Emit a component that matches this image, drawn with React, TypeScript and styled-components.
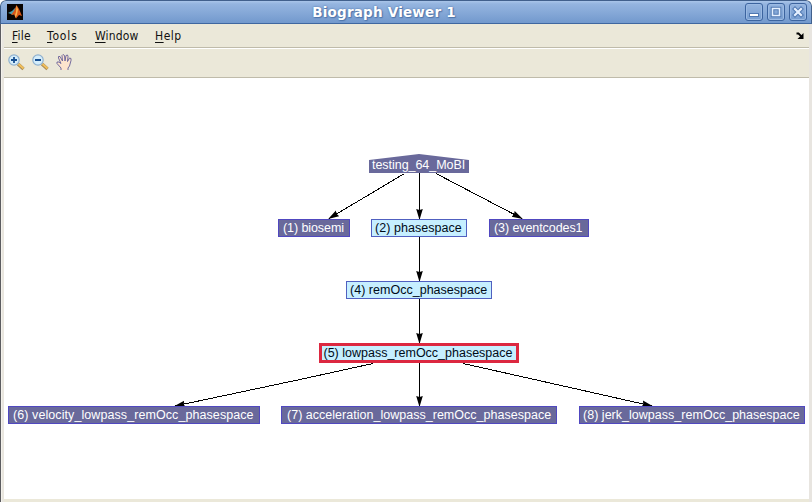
import React from 'react';
import styled, { createGlobalStyle } from 'styled-components';

const GlobalStyle = createGlobalStyle`
  * { box-sizing: border-box; }
  html, body { margin: 0; background: #fff; overflow: hidden; }
`;

const WindowFrame = styled.div`
  width: 812px;
  height: 502px;
  display: flex;
  flex-direction: column;
  background: #ebe8d9;
  border-radius: 6px 6px 0 0;
  overflow: hidden;
  font-family: 'DejaVu Sans', sans-serif;
`;

const TitleBar = styled.header`
  height: 24px;
  flex: none;
  display: grid;
  grid-template-columns: 36px 1fr 80px;
  align-items: center;
  border: 1px solid #41608c;
  border-bottom-color: #3f67a0;
  border-radius: 6px 6px 0 0;
  background: linear-gradient(#a9c5e9 0, #94b4df 3px, #85a8d7 12px, #7299cd 22px);
`;

const Title = styled.h1`
  margin: 0;
  text-align: center;
  font: bold 13.5px/22px 'DejaVu Sans', sans-serif;
  letter-spacing: 0.22px;
  color: #fff;
  text-shadow: 0 0 2px #44699f, 1px 1px 1px #5379ae;
`;

const AppIcon = styled.svg`
  width: 16px;
  height: 16px;
  margin-left: 6px;
`;

const WindowButtons = styled.div`
  display: flex;
  justify-content: flex-end;
  gap: 4px;
  padding-right: 4px;
`;

const WindowButton = styled.button`
  width: 18px;
  height: 18px;
  padding: 0;
  border: 1px solid #3c649f;
  border-radius: 3px;
  background: linear-gradient(#94b4df, #779dd0);
  box-shadow: inset 0 0 0 1px #9bbae3;
  svg { display: block; width: 16px; height: 16px; }
`;

const Body = styled.div`
  flex: 1;
  min-height: 0;
  display: flex;
  flex-direction: column;
  padding: 0 3px 3px 4px;
  background: linear-gradient(90deg, #5c5c60 0 1px, #f4f2ec 1px 2px, #e9e6df 2px 4px, #ebe8d9 4px 809px, #e8e5e0 809px);
`;

const MenuBar = styled.nav`
  height: 24px;
  flex: none;
  display: flex;
  align-items: center;
  border-bottom: 1px solid #bfbbaa;
  padding: 0 5px 0 8px;
`;

const MenuItem = styled.span<{ $width: number; $spacing: number }>`
  width: ${(p) => p.$width}px;
  font: 12px/22px 'DejaVu Sans Condensed', 'DejaVu Sans', sans-serif;
  font-stretch: condensed;
  letter-spacing: ${(p) => p.$spacing}px;
  white-space: nowrap;
  color: #111;
`;

const Mnemonic = styled.span`
  text-decoration: underline;
  text-decoration-thickness: 1px;
  text-underline-offset: 2px;
`;

const DockArrow = styled.svg`
  width: 8px;
  height: 8px;
  margin-left: auto;
`;

const ToolBar = styled.div`
  height: 30px;
  flex: none;
  display: flex;
  align-items: center;
  gap: 7px;
  padding: 0 0 2px 4px;
  border-top: 1px solid #fff;
  border-bottom: 1px solid #bfbbaa;
  svg { width: 17px; height: 17px; }
`;

const Canvas = styled.main`
  position: relative;
  flex: 1;
  min-height: 0;
  background: #fff;
`;

const Edges = styled.svg`
  position: absolute;
  inset: 0;
  width: 100%;
  height: 100%;
`;

type Kind = 'dark' | 'light' | 'selected' | 'root';

const fills: Record<Kind, string> = { dark: '#69699b', light: '#c6efff', selected: '#c6efff', root: '#69699b' };
const borders: Record<Kind, string> = {
  dark: '1px solid #5048c0',
  light: '1px solid #5060c0',
  selected: '3px solid #dc2840',
  root: '0 solid transparent',
};

const GraphNode = styled.div<{ $x: number; $y: number; $w: number; $h: number; $kind: Kind; $spacing: number; $pad: number }>`
  position: absolute;
  left: ${(p) => p.$x - 4}px;
  top: ${(p) => p.$y - 78}px;
  width: ${(p) => p.$w}px;
  height: ${(p) => p.$h}px;
  display: flex;
  align-items: center;
  background: ${(p) => fills[p.$kind]};
  border: ${(p) => borders[p.$kind]};
  clip-path: ${(p) => (p.$kind === 'root' ? 'polygon(0 6px, 50% 0, 100% 6px, 100% 100%, 0 100%)' : 'none')};
  padding: ${(p) => (p.$kind === 'root' ? 2 : 0)}px 0 0 ${(p) => p.$pad}px;
  color: ${(p) => (p.$kind === 'dark' || p.$kind === 'root' ? '#fff' : '#000b18')};
  font: 12.5px/14px 'Liberation Sans', Arial, sans-serif;
  letter-spacing: ${(p) => p.$spacing}px;
  white-space: nowrap;
`;

const nodes: { label: string; x: number; y: number; w: number; h: number; kind: Kind; spacing: number; pad: number }[] = [
  { label: 'testing_64_MoBI', x: 369, y: 154, w: 100, h: 19, kind: 'root', spacing: -0.04, pad: 3 },
  { label: '(1) biosemi', x: 278, y: 219, w: 72, h: 18, kind: 'dark', spacing: -0.08, pad: 4 },
  { label: '(2) phasespace', x: 371, y: 219, w: 96, h: 18, kind: 'light', spacing: 0.05, pad: 3 },
  { label: '(3) eventcodes1', x: 489, y: 219, w: 100, h: 18, kind: 'dark', spacing: -0.08, pad: 4 },
  { label: '(4) remOcc_phasespace', x: 346, y: 281, w: 146, h: 18, kind: 'light', spacing: 0.02, pad: 3 },
  { label: '(5) lowpass_remOcc_phasespace', x: 319, y: 343, w: 200, h: 20, kind: 'selected', spacing: 0, pad: 1.5 },
  { label: '(6) velocity_lowpass_remOcc_phasespace', x: 8, y: 406, w: 252, h: 18, kind: 'dark', spacing: 0.08, pad: 4 },
  { label: '(7) acceleration_lowpass_remOcc_phasespace', x: 281, y: 406, w: 276, h: 18, kind: 'dark', spacing: 0.02, pad: 5 },
  { label: '(8) jerk_lowpass_remOcc_phasespace', x: 579, y: 406, w: 226, h: 18, kind: 'dark', spacing: 0.02, pad: 3 },
];

const edges = [
  'M404.5 173.500L329 218.500', 'M419.5 173V219', 'M436 173.500L522 218.500',
  'M419.5 237V281', 'M419.5 299V343',
  'M373 363.500L300 379.500L175 406', 'M419.5 363V406', 'M463 363.500L530 378.500L652 406',
];

const menus = [
  { label: 'File', width: 35, spacing: 0.25 },
  { label: 'Tools', width: 48, spacing: 0.85 },
  { label: 'Window', width: 60, spacing: 0.15 },
  { label: 'Help', width: 40, spacing: 0.5 },
];

function Magnifier({ plus }: { plus?: boolean }) {
  return (
    <svg viewBox="0 0 17 17">
      <path d="M10 10l5.500 5" stroke="#a78a55" strokeWidth="3.400" />
      <path d="M10.500 10l5 4.500" stroke="#f2bf5a" strokeWidth="1.900" />
      <circle cx="6" cy="6" r="5.200" fill="#d4edfb" stroke="#8fb0ce" strokeWidth="1.200" />
      <path d={plus ? 'M3 6h6M6 3v6' : 'M3 6h6'} stroke="#174f91" strokeWidth="1.800" />
    </svg>
  );
}

export default function App() {
  return (
    <>
      <GlobalStyle />
      <WindowFrame>
        <TitleBar>
          <AppIcon viewBox="0 0 16 16">
            <rect width="16" height="16" fill="#080403" />
            <path d="M1 9l4-2 3-3 1 1-3 6-2-1z" fill="#4a9cac" />
            <path d="M4 11l3-4 2.500-6 2.500 4 3 7-3-1-3 3.500-2-4z" fill="#d95618" />
            <path d="M9.500 1.500l1.500 4-1 5-1.500 3.500-.5-3 1-3z" fill="#f9b24b" />
          </AppIcon>
          <Title>Biograph Viewer 1</Title>
          <WindowButtons>
            <WindowButton aria-label="Minimize">
              <svg viewBox="0 0 16 16"><rect x="3.500" y="9.500" width="9" height="3" fill="#fff" stroke="#4f78b2" /></svg>
            </WindowButton>
            <WindowButton aria-label="Maximize">
              <svg viewBox="0 0 16 16"><path d="M4.500 4.500h7v7h-7z" fill="none" stroke="#4f78b2" strokeWidth="3.600" /><path d="M4.500 4.500h7v7h-7z" fill="none" stroke="#e5f0ff" strokeWidth="1.600" /></svg>
            </WindowButton>
            <WindowButton aria-label="Close">
              <svg viewBox="0 0 16 16"><path d="M5 5l6 6M11 5l-6 6" stroke="#4f78b2" strokeWidth="4.200" strokeLinecap="square" /><path d="M5 5l6 6M11 5l-6 6" stroke="#e5f0ff" strokeWidth="2.200" strokeLinecap="square" /></svg>
            </WindowButton>
          </WindowButtons>
        </TitleBar>
        <Body>
          <MenuBar>
            {menus.map((m) => (
              <MenuItem key={m.label} $width={m.width} $spacing={m.spacing}>
                <Mnemonic>{m.label[0]}</Mnemonic>{m.label.slice(1)}
              </MenuItem>
            ))}
            <DockArrow viewBox="0 0 8 8"><path d="M.5 1.500h2L5.500 4.500" fill="none" stroke="#000" strokeWidth="1.800" /><path d="M7.500 1v6h-6z" /></DockArrow>
          </MenuBar>
          <ToolBar>
            <Magnifier plus />
            <Magnifier />
            <svg viewBox="0 0 17 17">
              <path d="M5 16v-2L1 9.500V8h2l2 1.500L2.500 4V2.500H4L6.500 7 6 1.500 7 .5l1.500 1L9 7l1-5.500 1.500-.5.500 1.500-.5 5L13.500 4l1.500.500v2L13.500 12 12 14v2z" fill="#fde3cd" />
              <path d="M5 16v-2L1 9.500V8h2l2 1.500L2.500 4V2.500H4L6.500 7 6 1.500 7 .5l1.500 1L9 7l1-5.500 1.500-.5.500 1.500-.5 5L13.500 4l1.500.500v2L13.500 12 12 14v2" fill="none" stroke="#655f98" strokeWidth=".9" />
            </svg>
          </ToolBar>
          <Canvas>
            <Edges>
              <defs>
                <marker id="arrow" markerUnits="userSpaceOnUse" markerWidth="12" markerHeight="8" refX="10" refY="3.500" orient="auto">
                  <path d="M0 .2L11 3.500 0 6.800l1-3.300z" />
                </marker>
              </defs>
              <g transform="translate(-4 -78)" fill="none" stroke="#000" shapeRendering="crispEdges">
                {edges.map((d) => <path key={d} d={d} markerEnd="url(#arrow)" />)}
              </g>
            </Edges>
            {nodes.map((n) => (
              <GraphNode key={n.label} $x={n.x} $y={n.y} $w={n.w} $h={n.h} $kind={n.kind} $spacing={n.spacing} $pad={n.pad}>
                {n.label}
              </GraphNode>
            ))}
          </Canvas>
        </Body>
      </WindowFrame>
    </>
  );
}
